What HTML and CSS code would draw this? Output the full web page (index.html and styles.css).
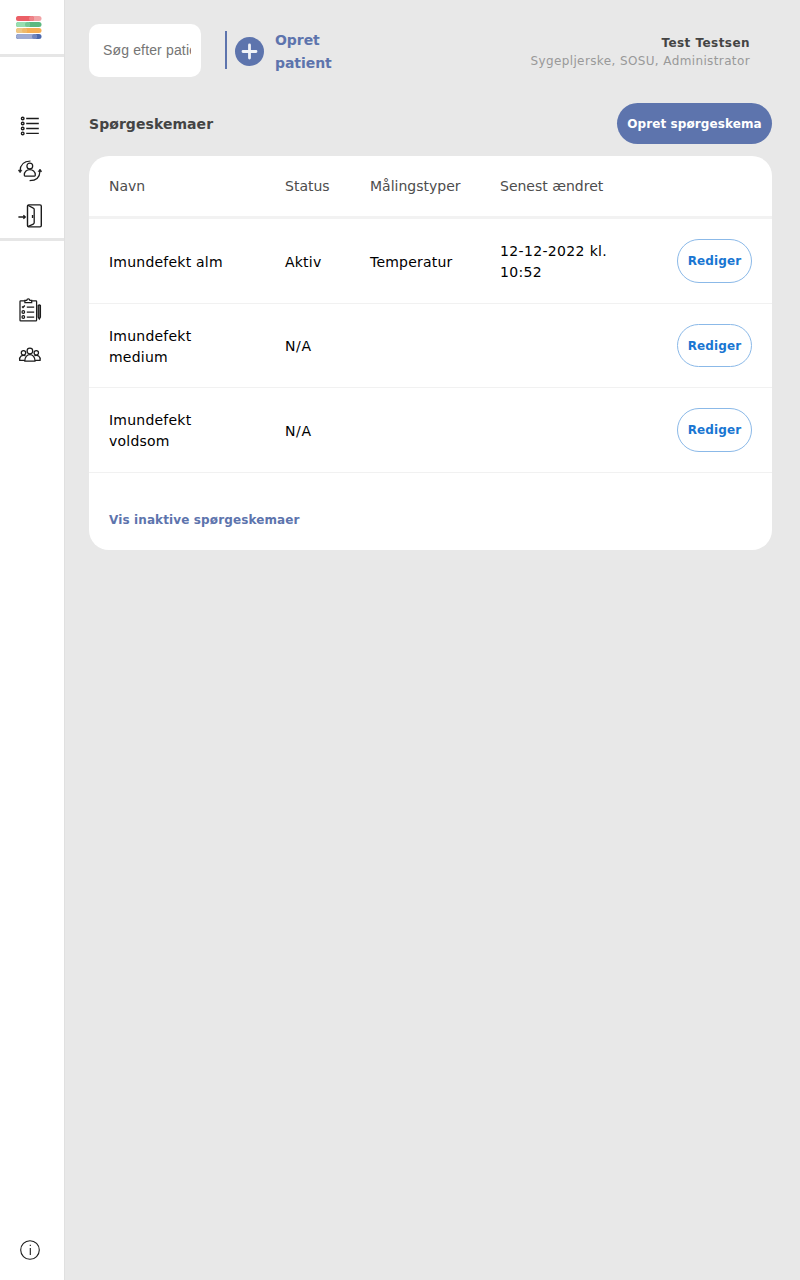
FILE: index.html
```html
<!DOCTYPE html>
<html lang="da">
<head>
<meta charset="utf-8">
<title>Spørgeskemaer</title>
<link rel="stylesheet" href="styles.css">
</head>
<body>
<div class="app">
  <nav class="sidebar">
    <div class="logo">
      <svg width="26" height="24" viewBox="0 0 26 24">
        <rect x="0" y="0" width="25.500" height="5" rx="2.500" fill="#f1a3a6"/><path d="M2.500 0H15.500a2.500 2.500 0 0 1 0 5H2.500a2.500 2.500 0 0 1 0-5z" fill="#eb5f66"/><circle cx="15.500" cy="2.500" r="2.500" fill="#ed8388"/>
        <rect x="0" y="6" width="25.500" height="5" rx="2.500" fill="#5cb880"/><path d="M2.500 6H11.500a2.500 2.500 0 0 1 0 5H2.500a2.500 2.500 0 0 1 0-5z" fill="#98deb0"/><circle cx="11.500" cy="8.500" r="2.500" fill="#75c795"/>
        <rect x="0" y="12" width="25.500" height="5" rx="2.500" fill="#f5ae54"/><path d="M2.500 12H8.500a2.500 2.500 0 0 1 0 5H2.500a2.500 2.500 0 0 1 0-5z" fill="#eec785"/><circle cx="8.500" cy="14.500" r="2.500" fill="#efb96b"/>
        <rect x="0" y="18" width="25.500" height="5" rx="2.500" fill="#4b68ad"/><path d="M2.500 18H18.500a2.500 2.500 0 0 1 0 5H2.500a2.500 2.500 0 0 1 0-5z" fill="#9eabd3"/><circle cx="18.500" cy="20.500" r="2.500" fill="#7085bd"/>
      </svg>
    </div>
    <div class="menu menu-main">
      <svg class="icon" viewBox="0 0 24 24">
        <g stroke-width="1.400"><circle cx="4.700" cy="4.500" r="1.300"/><circle cx="4.700" cy="9.500" r="1.300"/><circle cx="4.700" cy="14.500" r="1.300"/><circle cx="4.700" cy="19.400" r="1.300"/><path d="M8.200 4.500h12.600M8.200 9.500h12.600M8.200 14.500h12.600M8.200 19.400h12.600"/></g>
      </svg>
      <svg class="icon" viewBox="0 0 24 24">
        <circle cx="11.800" cy="7" r="2.900"/><path d="M6.300 16.300c-.2-7.500 11.200-7.500 11 0q0 .7-.7.700H7q-.7 0-.7-.7z"/>
        <path d="M12.500 2C6 2.200 2.200 6 2.100 12M11.600 21.700C18 21.700 21.800 18 22 12"/>
        <path d="M.3 11.200h3.600l-1.800 2.600zM20.200 12.600h3.600L22 10z" fill="#1c1c1c" stroke-width=".6"/>
      </svg>
      <svg class="icon" viewBox="0 0 24 24">
        <rect x="9.500" y=".9" width="13.800" height="22" rx="1.300" stroke-width="1.400"/><path d="M9.800 1.200l5.500 2.900q.9.400.9 1.500v13q0 1.100-.9 1.500l-5.500 2.500M14.500 11v3M.4 13h7M5.400 11.200l1.900 1.800-1.900 1.800" stroke-width="1.300"/>
      </svg>
    </div>
    <div class="menu menu-admin">
      <svg class="icon" viewBox="0 0 24 24">
        <path d="M6.500 2.900H2.700q-.7 0-.7.700v18.600q0 .7.700.7h15.200q.7 0 .7-.7V3.600q0-.7-.7-.7h-3.800M6.900 4.500V2.300h1.800q.3-1.500 1.600-1.500t1.600 1.500h1.800v2.200z"/>
        <path d="M4 8.500l1 1 1.800-2M8.800 9h7.400M8.800 14h7.400M8.800 19h7.400"/><circle cx="5.300" cy="14" r="1.300"/><circle cx="5.300" cy="19" r="1.300"/>
        <path d="M20.200 7.500q1.200-1 2.200 0v11.500l-1.100 2-1.100-2z" fill="#777" stroke-width="1.300"/>
      </svg>
      <svg class="icon" viewBox="0 0 24 24">
        <circle cx="11.900" cy="8" r="2.800"/><circle cx="5.500" cy="9.800" r="2.200"/><circle cx="18.300" cy="9.800" r="2.200"/>
        <path d="M6.800 18.200c-.5-8.700 10.700-8.700 10.200 0zM6.500 17.300H1.700c-.5-4 2.400-6 5.800-4.500M17.300 17.300h4.800c.5-4-2.400-6-5.800-4.500"/>
      </svg>
    </div>
    <svg class="icon info" viewBox="0 0 24 24">
      <circle cx="12" cy="12" r="9.300"/><path d="M12.300 10v7M12.300 6.700v1.300"/>
    </svg>
  </nav>
  <main class="content">
    <header class="topbar">
      <input class="search" type="text" placeholder="Søg efter patient">
      <a class="create-patient">
        <svg width="29" height="29" viewBox="0 0 29 29"><circle cx="14.500" cy="14.500" r="14.500" fill="#5d74ad"/><path d="M14.500 8v13M8 14.500h13" stroke="#f1f3f8" stroke-width="2.800" stroke-linecap="round"/></svg>
        <span>Opret patient</span>
      </a>
      <div class="user">
        <div class="user-name">Test Testsen</div>
        <div class="user-roles">Sygepljerske, SOSU, Administrator</div>
      </div>
    </header>
    <div class="heading">
      <h1 class="title">Spørgeskemaer</h1>
      <button class="primary">Opret spørgeskema</button>
    </div>
    <section class="card">
      <div class="row head"><span>Navn</span><span>Status</span><span>Målingstyper</span><span>Senest ændret</span></div>
      <div class="row first"><span class="cell name">Imundefekt alm</span><span class="cell">Aktiv</span><span class="cell">Temperatur</span><span class="cell date">12-12-2022 kl. 10:52</span><button class="edit">Rediger</button></div>
      <div class="row second"><span class="cell name">Imundefekt medium</span><span class="cell na">N/A</span><span></span><span></span><button class="edit">Rediger</button></div>
      <div class="row third"><span class="cell name">Imundefekt voldsom</span><span class="cell na">N/A</span><span></span><span></span><button class="edit">Rediger</button></div>
      <div class="card-footer"><a class="show-inactive">Vis inaktive spørgeskemaer</a></div>
    </section>
  </main>
</div>
</body>
</html>
```
FILE: styles.css
```css
* { box-sizing: border-box; }
body { margin: 0; background: #e8e8e8; font-family: Verdana, "DejaVu Sans", sans-serif; font-size: 14px; color: #000; }
.app { display: flex; height: 1280px; }
.sidebar { width: 65px; flex: none; display: flex; flex-direction: column; background: #fff; border-right: 1px solid #e0e0e0; }
.logo { height: 57px; padding: 16px 0 0 16px; border-bottom: 3px solid #e6e6e6; }
.logo svg { display: block; }
.icon { display: block; width: 24px; height: 24px; fill: none; stroke: #1c1c1c; stroke-width: 1.25; }
.menu { display: flex; flex-direction: column; gap: 21px; padding-left: 18px; }
.menu-main { height: 184px; padding-top: 57px; border-bottom: 3px solid #e6e6e6; }
.menu-admin { padding-top: 57px; }
.info { margin: auto 0 18px 18px; stroke-width: 1.1; }
.content { flex: 1; padding: 24px 28px 0 24px; }
.topbar { display: flex; height: 53px; }
.search { width: 112px; height: 53px; padding: 0 10px 2px 14px; border: 0; border-radius: 10px; background: #fff; font: 14px "Liberation Sans", Arial, sans-serif; letter-spacing: .15px; }
.search::placeholder { color: #757575; }
.create-patient { display: flex; align-items: center; gap: 11px; width: 125px; height: 38px; margin: 7px 0 0 24px; padding-left: 8px; border-left: 2px solid #5d74ad; color: #5d74ad; font-weight: bold; font-size: 14px; line-height: 23px; }
.create-patient svg { flex: none; margin-top: 2px; }
.create-patient span { padding-top: 3px; letter-spacing: -.05px; }
.user { margin-left: auto; padding: 10px 22px 0 0; text-align: right; line-height: 18px; font-size: 12px; white-space: nowrap; }
.user-name { color: #444; font-weight: bold; letter-spacing: .45px; }
.user-roles { color: #999; letter-spacing: .38px; }
.heading { display: flex; align-items: center; justify-content: space-between; height: 41px; margin-top: 26px; }
.title { margin: 0; font-size: 14px; color: #444; letter-spacing: .06px; }
.primary { width: 155px; height: 41px; padding: 0; border: 0; border-radius: 21px; background: #5d74ad; color: #fff; font: bold 12px Verdana, "DejaVu Sans", sans-serif; letter-spacing: .1px; white-space: nowrap; }
.card { height: 394px; margin-top: 12px; border-radius: 20px; background: #fff; overflow: hidden; }
.row { display: grid; grid-template-columns: 176px 85px 130px 177px 75px; align-items: center; padding: 0 20px; border-bottom: 1px solid #f1f1f1; line-height: 21px; }
.head { height: 63px; border-bottom: 3px solid #f2f2f2; color: #4d4d4d; }
.first { height: 85px; }
.second { height: 84px; }
.third { height: 85px; }
.cell { padding-top: 2px; letter-spacing: .22px; }
.na { letter-spacing: .6px; }
.name { padding-right: 40px; }
.date { padding-right: 60px; letter-spacing: .35px; }
.edit { width: 75px; height: 44px; padding: 0; border: 1px solid #8bb9e8; border-radius: 22px; background: none; color: #1976d2; font: bold 12px Verdana, "DejaVu Sans", sans-serif; letter-spacing: .1px; }
.second .edit { height: 43px; }
.card-footer { padding: 37px 20px 0; }
.show-inactive { color: #5d74ad; font-size: 12px; font-weight: bold; line-height: 21px; letter-spacing: .12px; }
```
